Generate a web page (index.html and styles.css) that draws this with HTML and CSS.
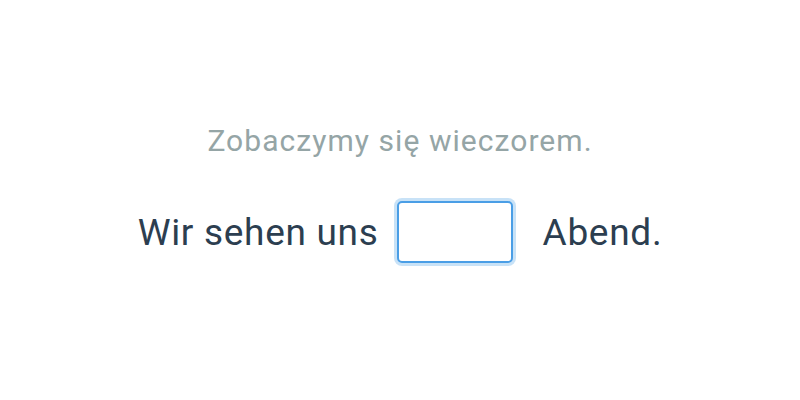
FILE: index.html
```html
<!DOCTYPE html>
<html>
<head>
<meta charset="utf-8">
<link rel="stylesheet" href="styles.css">
</head>
<body>
<div class="card">
  <p class="source">Zobaczymy się wieczorem.</p>
  <div class="sentence">
    <span class="word">Wir sehen uns</span>
    <input class="gap" type="text" aria-label="Lücke">
    <span class="word">Abend.</span>
  </div>
</div>
</body>
</html>
```
FILE: styles.css
```css
html, body {
  margin: 0;
  padding: 0;
  background: #ffffff;
}
body {
  width: 800px;
  height: 400px;
  font-family: Roboto, "Noto Sans", sans-serif;
}
.card {
  display: flex;
  flex-direction: column;
  align-items: center;
  padding-top: 121px;
}
.source {
  margin: 0;
  font-size: 30px;
  letter-spacing: 1.05px;
  line-height: 40px;
  color: #95a5a6;
}
.sentence {
  display: flex;
  align-items: center;
  margin-top: 40px;
  font-size: 37px;
  letter-spacing: 0.7px;
  color: #2c3e50;
}
.gap {
  box-sizing: border-box;
  width: 116px;
  height: 62px;
  margin: 0 30px 0 18px;
  border: 2px solid #4a9ee6;
  border-radius: 5px;
  box-shadow: 0 0 0 3px rgba(74, 158, 230, 0.3);
  outline: none;
  background: #fff;
  font: inherit;
}
```
